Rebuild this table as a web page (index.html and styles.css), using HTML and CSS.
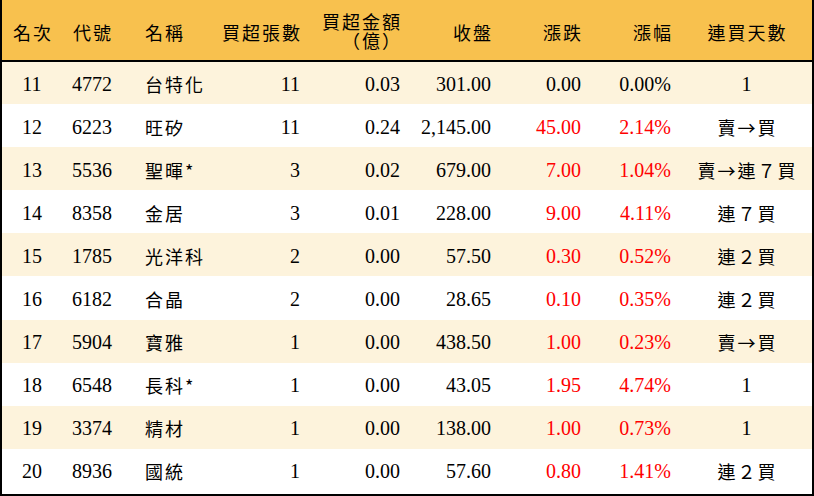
FILE: index.html
```html
<!DOCTYPE html>
<html lang="zh-Hant">
<head>
<meta charset="utf-8">
<title>買超排行</title>
<link rel="stylesheet" href="styles.css">
</head>
<body>
<div class="frame">
<table class="rank">
<colgroup>
<col class="w-rank"><col class="w-code"><col class="w-name"><col class="w-vol"><col class="w-amt"><col class="w-close"><col class="w-chg"><col class="w-pct"><col class="w-days">
</colgroup>
<thead>
<tr>
<th class="c">名次</th><th class="c">代號</th><th class="l">名稱</th><th class="r">買超張數</th><th class="r two"><span class="ln">買超金額</span><span class="ln">（億）</span></th><th class="r">收盤</th><th class="r">漲跌</th><th class="r">漲幅</th><th class="c">連買天數</th>
</tr>
</thead>
<tbody>
<tr><td class="c">11</td><td class="c">4772</td><td class="l cjk">台特化</td><td class="r">11</td><td class="r">0.03</td><td class="r">301.00</td><td class="r">0.00</td><td class="r">0.00%</td><td class="c">1</td></tr>
<tr><td class="c">12</td><td class="c">6223</td><td class="l cjk">旺矽</td><td class="r">11</td><td class="r">0.24</td><td class="r">2,145.00</td><td class="r up">45.00</td><td class="r up">2.14%</td><td class="c cjk">賣→買</td></tr>
<tr><td class="c">13</td><td class="c">5536</td><td class="l cjk">聖暉*</td><td class="r">3</td><td class="r">0.02</td><td class="r">679.00</td><td class="r up">7.00</td><td class="r up">1.04%</td><td class="c cjk">賣→連７買</td></tr>
<tr><td class="c">14</td><td class="c">8358</td><td class="l cjk">金居</td><td class="r">3</td><td class="r">0.01</td><td class="r">228.00</td><td class="r up">9.00</td><td class="r up">4.11%</td><td class="c cjk">連７買</td></tr>
<tr><td class="c">15</td><td class="c">1785</td><td class="l cjk">光洋科</td><td class="r">2</td><td class="r">0.00</td><td class="r">57.50</td><td class="r up">0.30</td><td class="r up">0.52%</td><td class="c cjk">連２買</td></tr>
<tr><td class="c">16</td><td class="c">6182</td><td class="l cjk">合晶</td><td class="r">2</td><td class="r">0.00</td><td class="r">28.65</td><td class="r up">0.10</td><td class="r up">0.35%</td><td class="c cjk">連２買</td></tr>
<tr><td class="c">17</td><td class="c">5904</td><td class="l cjk">寶雅</td><td class="r">1</td><td class="r">0.00</td><td class="r">438.50</td><td class="r up">1.00</td><td class="r up">0.23%</td><td class="c cjk">賣→買</td></tr>
<tr><td class="c">18</td><td class="c">6548</td><td class="l cjk">長科*</td><td class="r">1</td><td class="r">0.00</td><td class="r">43.05</td><td class="r up">1.95</td><td class="r up">4.74%</td><td class="c">1</td></tr>
<tr><td class="c">19</td><td class="c">3374</td><td class="l cjk">精材</td><td class="r">1</td><td class="r">0.00</td><td class="r">138.00</td><td class="r up">1.00</td><td class="r up">0.73%</td><td class="c">1</td></tr>
<tr><td class="c">20</td><td class="c">8936</td><td class="l cjk">國統</td><td class="r">1</td><td class="r">0.00</td><td class="r">57.60</td><td class="r up">0.80</td><td class="r up">1.41%</td><td class="c cjk">連２買</td></tr>
</tbody>
</table>
</div>
</body>
</html>
```
FILE: styles.css
```css
html, body {
  margin: 0;
  padding: 0;
  background: #ffffff;
}

.frame {
  width: 814px;
  height: 496px;
  box-sizing: border-box;
  border-left: 2px solid #000;
  border-right: 2px solid #000;
  border-bottom: 2px solid #000;
  overflow: hidden;
}

.rank {
  width: 810px;
  border-collapse: collapse;
  table-layout: fixed;
  font-family: "Liberation Serif", "Noto Sans CJK TC", serif;
  font-size: 20px;
  color: #000;
}

.w-rank { width: 60px; }
.w-code { width: 60px; }
.w-name { width: 88px; }
.w-vol { width: 100px; }
.w-amt { width: 100px; }
.w-close { width: 91px; }
.w-chg { width: 90px; }
.w-pct { width: 90px; }
.w-days { width: 131px; }

.rank thead tr {
  height: 61px;
  background: #f8c14e;
}

.rank thead th {
  font-family: "Noto Sans CJK TC", sans-serif;
  font-weight: 400;
  font-size: 18px;
  line-height: 20px;
  letter-spacing: 2px;
  padding: 4px 0 0 0;
  border-bottom: 2px solid #000;
  vertical-align: middle;
}

.rank thead th.c {
  padding-left: 2px;
}

.rank thead th.r {
  padding-right: 8px !important;
}

.rank thead th.two {
  padding-top: 1px;
}

.ln {
  display: block;
  height: 19px;
  line-height: 19px;
}

.rank tbody tr {
  height: 43.1px;
}

.rank tbody tr:nth-child(odd) {
  background: #fdf3dc;
}

.rank tbody tr:nth-child(even) {
  background: #ffffff;
}

.rank td {
  padding: 2px 0 0 0;
  vertical-align: middle;
  white-space: nowrap;
  line-height: 24px;
}

.c { text-align: center; }
.l { text-align: left; padding-left: 23px !important; }
.r { text-align: right; padding-right: 10px !important; }

.cjk {
  font-family: "Noto Sans CJK TC", sans-serif;
  font-size: 18px;
  letter-spacing: 2px;
}

.rank td.c.cjk {
  padding-left: 2px;
}

.up { color: #ff0000; }
```
